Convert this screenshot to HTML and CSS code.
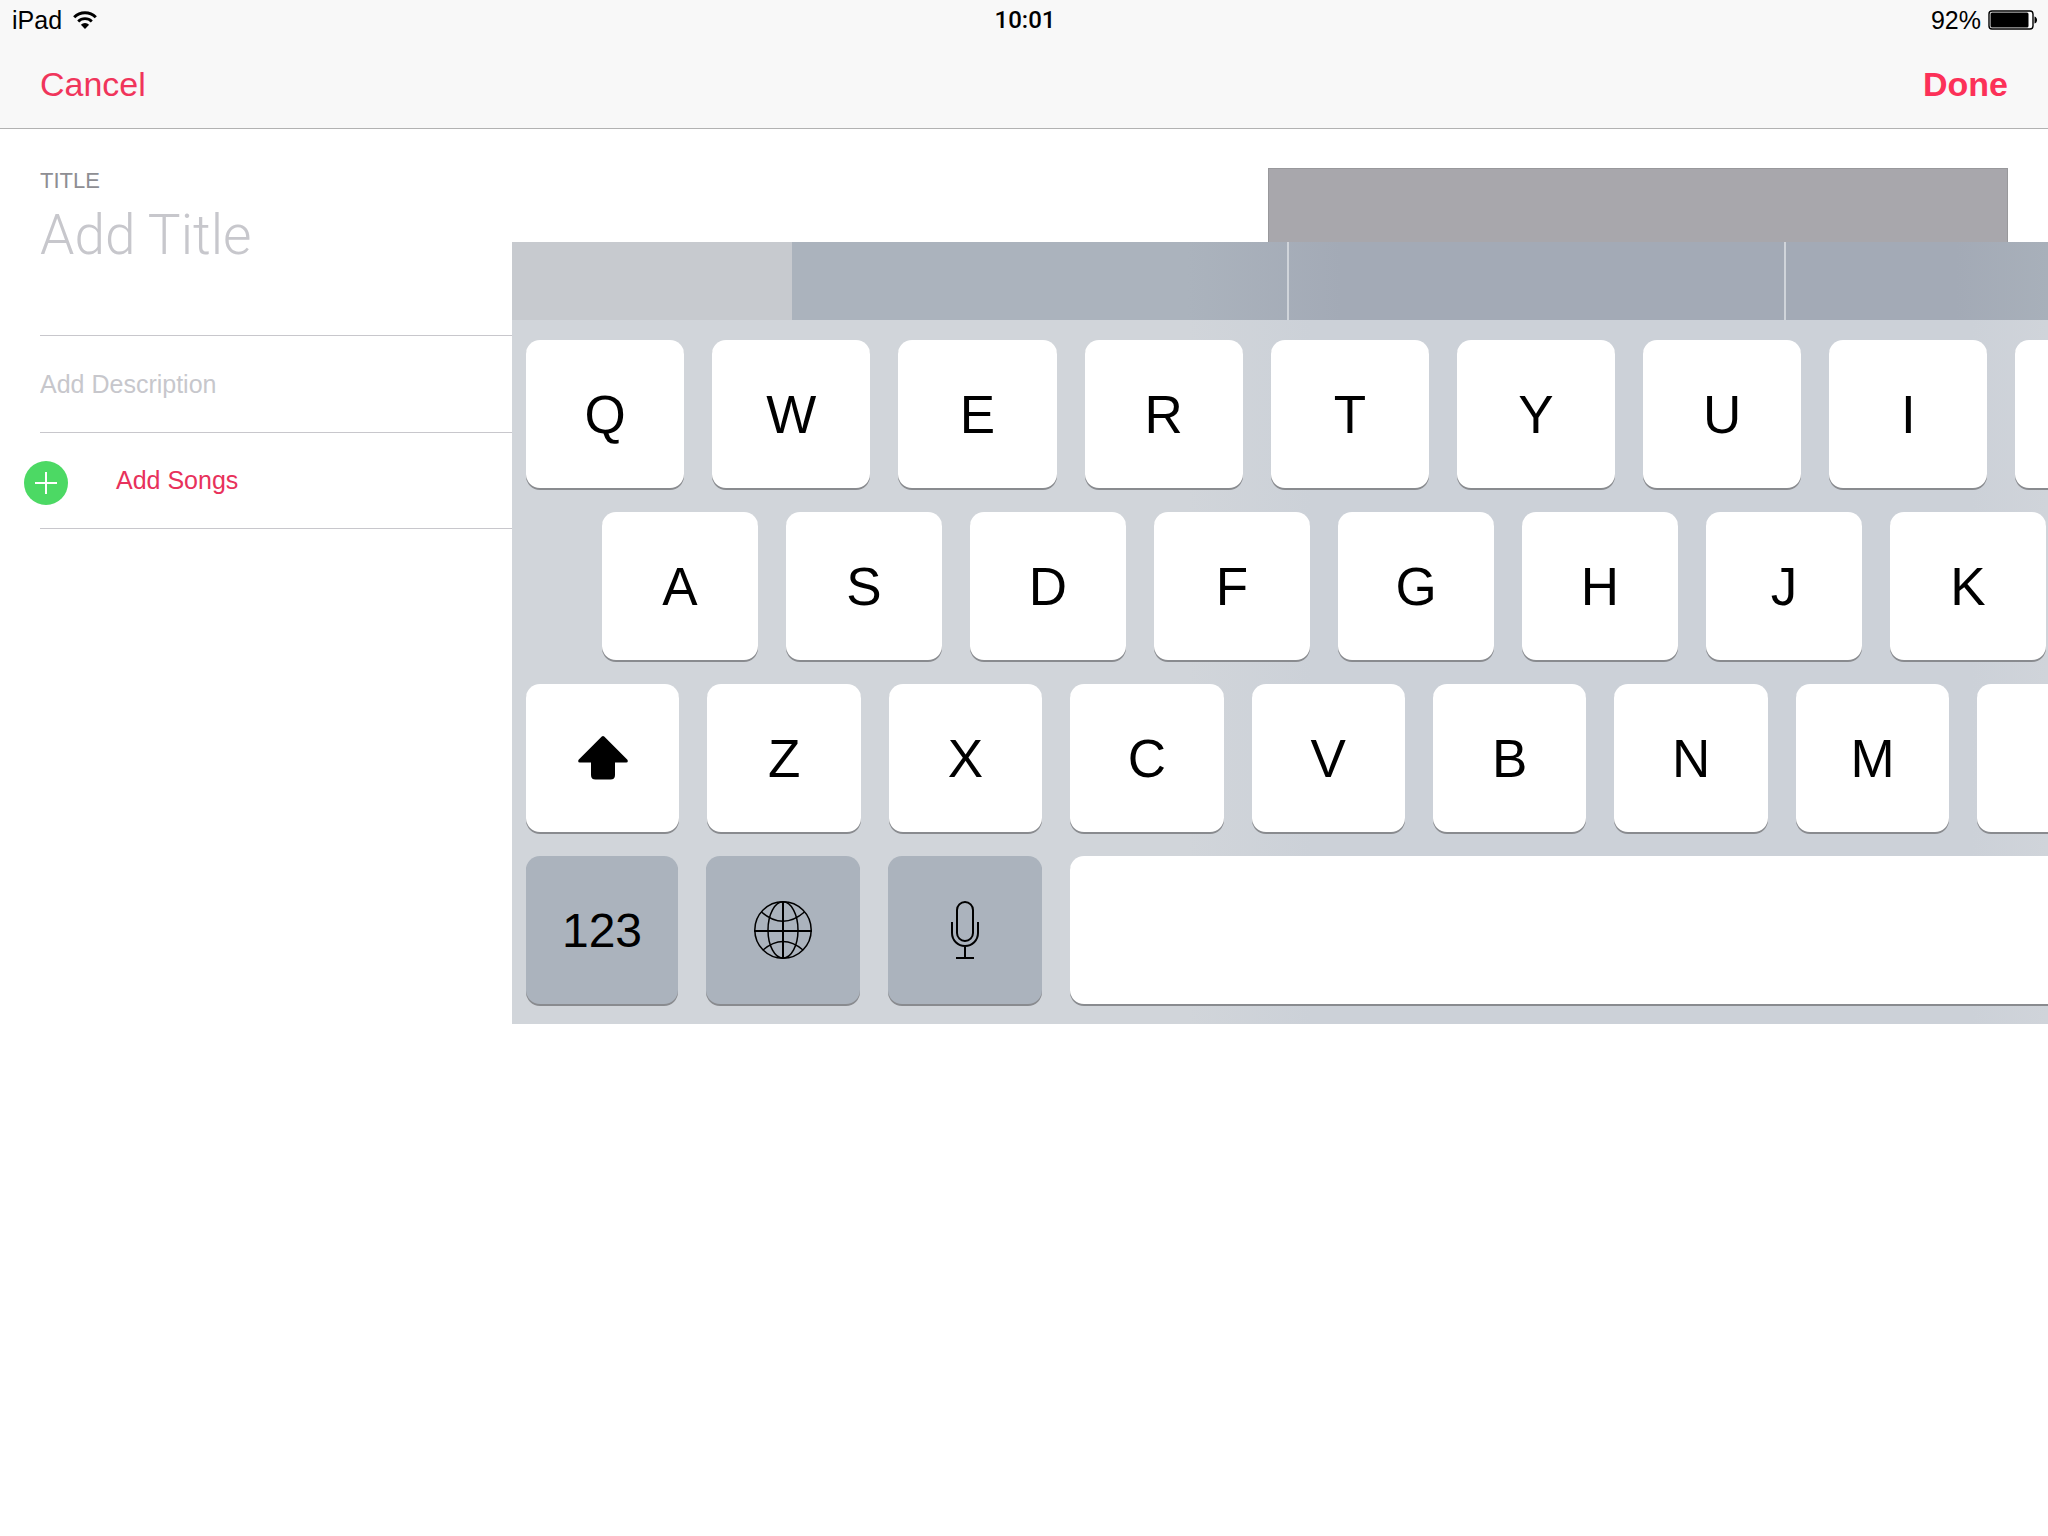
FILE: index.html
```html
<!DOCTYPE html>
<html lang="en">
<head>
    <meta charset="UTF-8">
    <meta name="viewport" content="width=device-width, initial-scale=1.0">
    <title>New Playlist</title>
    <link rel="stylesheet" href="styles.css">
</head>
<body>
    <header class="top-bar">
        <div class="status-bar">
            <div class="status-left">
                <span>iPad</span>
                <svg class="wifi-icon" viewBox="0 0 24 18" aria-hidden="true">
                    <path d="M1.2 6.2a15.3 15.3 0 0 1 21.6 0" fill="none" stroke="#000" stroke-width="3"/>
                    <path d="M5.2 10.4a9.6 9.6 0 0 1 13.6 0" fill="none" stroke="#000" stroke-width="2.8"/>
                    <path d="M12 18L7.9 13.7a5.8 5.8 0 0 1 8.2 0z"/>
                </svg>
            </div>
            <span class="status-time">10:01</span>
            <div class="status-right">
                <span>92%</span>
                <svg class="battery-icon" viewBox="0 0 50 20" aria-hidden="true">
                    <rect x="1" y="1" width="44" height="18" rx="3" fill="#fff" stroke="#000" stroke-width="1.4"/>
                    <rect x="2.5" y="2.5" width="38" height="15" rx="1.5"/>
                    <path d="M46.5 6.5c3.4 1 3.4 6 0 7z"/>
                </svg>
            </div>
        </div>
        <nav class="nav-bar">
            <button class="nav-button" type="button">Cancel</button>
            <button class="nav-button nav-button-done" type="button">Done</button>
        </nav>
    </header>

    <main class="editor">
        <form class="playlist-form">
            <div class="row row-title">
                <label for="title">TITLE</label>
                <input id="title" class="title-input" type="text" placeholder="Add Title">
            </div>
            <div class="row">
                <input class="description-input" type="text" placeholder="Add Description" aria-label="Description">
            </div>
            <div class="row row-songs">
                <button class="add-songs" type="button">
                    <svg class="add-icon" viewBox="0 0 44 50" aria-hidden="true">
                        <circle cx="22" cy="29" r="20" fill="#efefef"/>
                        <circle cx="22" cy="27" r="22" fill="#4cd964"/>
                        <path d="M11 27h22M22 16v22" stroke="#fff" stroke-width="2"/>
                    </svg>
                    <span>Add Songs</span>
                </button>
            </div>
        </form>
        <div class="artwork"></div>
    </main>

    <section class="keyboard" aria-label="Keyboard">
        <div class="suggestions">
            <div class="suggestion-edge"></div>
            <div class="suggestion"></div>
            <div class="suggestion"></div>
            <div class="suggestion"></div>
        </div>
        <div class="keys">
            <div class="key-row key-row-top">
                <button class="key" type="button">Q</button>
                <button class="key" type="button">W</button>
                <button class="key" type="button">E</button>
                <button class="key" type="button">R</button>
                <button class="key" type="button">T</button>
                <button class="key" type="button">Y</button>
                <button class="key" type="button">U</button>
                <button class="key" type="button">I</button>
                <button class="key" type="button" aria-label="O"></button>
            </div>
            <div class="key-row key-row-home">
                <button class="key" type="button">A</button>
                <button class="key" type="button">S</button>
                <button class="key" type="button">D</button>
                <button class="key" type="button">F</button>
                <button class="key" type="button">G</button>
                <button class="key" type="button">H</button>
                <button class="key" type="button">J</button>
                <button class="key" type="button">K</button>
            </div>
            <div class="key-row key-row-bottom">
                <button class="key" type="button" aria-label="Shift">
                    <svg class="shift-icon" viewBox="0 0 50 44" aria-hidden="true">
                        <path d="M23.8.6q1.2-1.1 2.4 0L49.4 23.8q1.2 2.6-1.2 2.7H37V39q0 4.5-4.5 4.5h-15Q13 43.500 13 39V26.500H1.800Q-.6 26.400.6 23.800z"/>
                    </svg>
                </button>
                <button class="key" type="button">Z</button>
                <button class="key" type="button">X</button>
                <button class="key" type="button">C</button>
                <button class="key" type="button">V</button>
                <button class="key" type="button">B</button>
                <button class="key" type="button">N</button>
                <button class="key" type="button">M</button>
                <button class="key" type="button" aria-label="Comma"></button>
            </div>
            <div class="key-row key-row-space">
                <button class="key key-dark" type="button">123</button>
                <button class="key key-dark" type="button" aria-label="Next keyboard">
                    <svg class="globe-icon" viewBox="0 0 58 58" aria-hidden="true">
                        <circle cx="29" cy="29" r="28.2"/>
                        <ellipse cx="29" cy="29" rx="15" ry="28.2"/>
                        <path d="M7.5 11Q29 29.500 50.500 11M9 49Q29 32 49 49"/>
                        <path d="M0 30h58M29 0v58" stroke-width="2"/>
                    </svg>
                </button>
                <button class="key key-dark" type="button" aria-label="Dictation">
                    <svg class="mic-icon" viewBox="0 0 28 58" aria-hidden="true">
                        <rect x="6" y="1" width="16" height="39" rx="8"/>
                        <path d="M1 21v11a13 13 0 0 0 26 0V21M14 45v12M5 57h18"/>
                    </svg>
                </button>
                <button class="key" type="button" aria-label="Space"></button>
            </div>
        </div>
    </section>
</body>
</html>
```
FILE: styles.css
```css
* {
    box-sizing: border-box;
}
body {
    margin: 0;
    min-height: 100vh;
    position: relative;
    overflow-x: hidden;
    font-family: "Liberation Sans", Arial, sans-serif;
    font-size: 25px;
    background: #fff;
    color: #000;
}
button,
input {
    font: inherit;
    border: none;
    padding: 0;
    margin: 0;
    background: none;
}
svg {
    display: block;
}

/* Status bar and navigation */
.top-bar {
    background: #f8f8f8;
    border-bottom: 1px solid #b2b2b2;
}
.status-bar {
    display: grid;
    grid-template-columns: 1fr auto 1fr;
    align-items: center;
    height: 40px;
    padding: 0 10px 0 12px;
}
.status-left,
.status-right {
    display: flex;
    align-items: center;
    gap: 11px;
}
.status-right {
    justify-content: flex-end;
    gap: 7px;
}
.status-time {
    font-family: Roboto, "Liberation Sans", sans-serif;
    font-size: 24px;
    font-weight: 500;
}
.wifi-icon {
    width: 24px;
    height: 18px;
}
.battery-icon {
    width: 50px;
    height: 20px;
}
.nav-bar {
    display: flex;
    justify-content: space-between;
    align-items: center;
    height: 88px;
    padding: 0 40px;
}
.nav-button {
    font-size: 34px;
    color: #f0355b;
    cursor: pointer;
}
.nav-button-done {
    font-weight: bold;
    color: #fc3158;
}

/* Playlist form */
.editor {
    display: flex;
    gap: 40px;
    padding: 0 40px;
}
.playlist-form {
    flex: 1;
}
.row {
    display: flex;
    align-items: center;
    height: 97px;
    border-bottom: 1px solid #c8c7cc;
}
.row-title {
    flex-direction: column;
    align-items: stretch;
    height: 207px;
    padding-top: 39px;
}
.row-songs {
    height: 96px;
}
.row-title label {
    font-size: 22px;
    line-height: 26px;
    color: #8e8e93;
}
.title-input {
    height: 82px;
    font-family: Roboto, "Liberation Sans", sans-serif;
    font-size: 55px;
    font-weight: 300;
}
.description-input {
    width: 100%;
    height: 60px;
}
.title-input::placeholder,
.description-input::placeholder {
    color: #c7c7cc;
    opacity: 1;
}
.add-songs {
    display: flex;
    align-items: center;
    gap: 48px;
    margin-left: -16px;
    color: #e8315b;
    cursor: pointer;
}
.add-icon {
    width: 44px;
    height: 50px;
}
.artwork {
    width: 740px;
    height: 740px;
    margin-top: 39px;
    background: #a8a7ac;
    border: 1px solid #98989b;
}

/* Keyboard, lies over the form */
.keyboard {
    position: absolute;
    top: 242px;
    left: 25%;
    right: 0;
    overflow: hidden;
    background: linear-gradient(to right, #d1d5da 44%, #ccd1d8 52%, #ccd1d8 95%, #d0d4da);
}
.suggestions {
    display: flex;
    height: 78px;
    background: linear-gradient(to right, #abb3bd 44%, #a3aab6 54%, #a3aab6 94%, #a8b0ba);
}
.suggestion-edge {
    flex: none;
    width: 280px;
    background: #c7cacf;
}
.suggestion {
    flex: none;
    width: 497px;
    border-right: 2px solid #d0d4da;
}
.keys {
    display: grid;
    gap: 24px;
    width: 100vw;
    padding: 20px 14px;
}
.key-row {
    display: grid;
    gap: 28px;
}
.key-row-top {
    grid-template-columns: repeat(11, 1fr);
}
.key-row-home {
    grid-template-columns: repeat(9, 1fr) 288px;
    padding-left: 76px;
}
.key-row-bottom {
    grid-template-columns: repeat(10, 1fr) 206px;
}
.key-row-space {
    grid-template-columns: 152px 154px 154px 1fr;
}
.key {
    display: flex;
    align-items: center;
    justify-content: center;
    height: 148px;
    border-radius: 14px;
    background: #fff;
    box-shadow: 0 2px 0 #898b8f;
    color: #000;
    font-size: 53px;
    cursor: pointer;
}
.key-dark {
    background: #abb3bd;
    font-size: 48px;
}
.shift-icon {
    width: 50px;
    height: 44px;
}
.globe-icon,
.mic-icon {
    height: 58px;
    fill: none;
    stroke: #000;
    stroke-width: 1.5;
}
.globe-icon {
    width: 58px;
}
.mic-icon {
    width: 28px;
    stroke-width: 2;
}
```
